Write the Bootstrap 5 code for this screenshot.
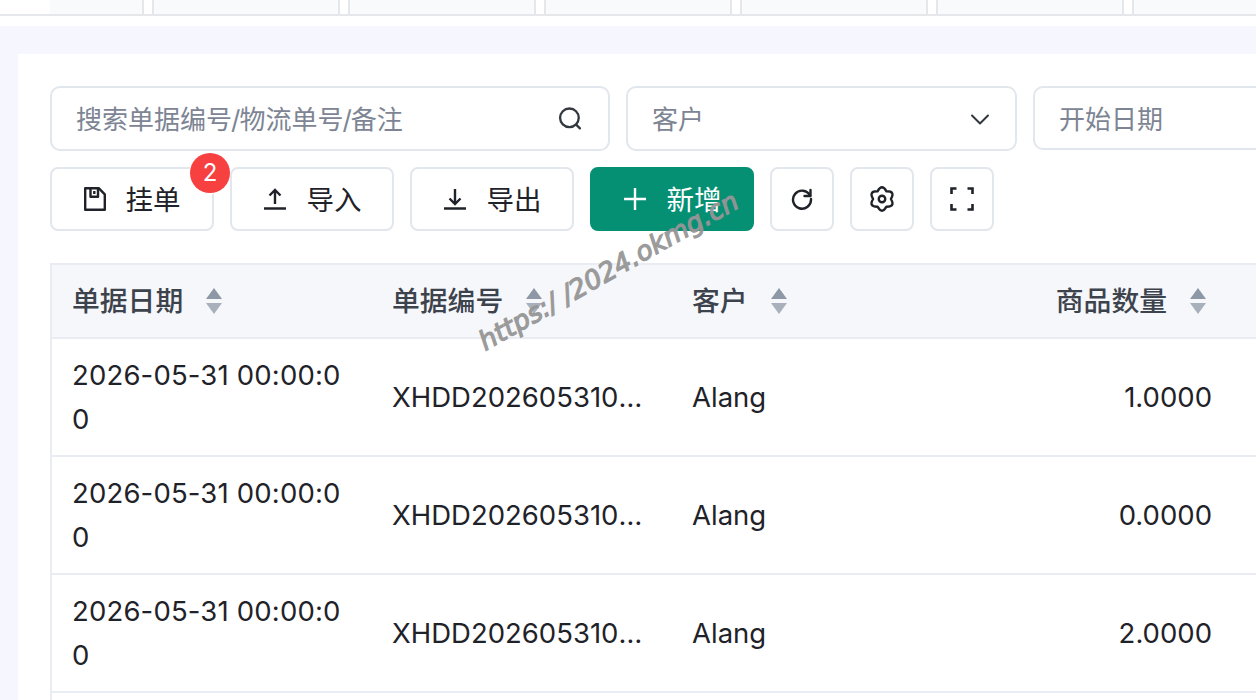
<!doctype html>
<html lang="zh">
<head>
<meta charset="utf-8">
<title>订单</title>
<link href="https://cdn.jsdelivr.net/npm/bootstrap@5.3.0/dist/css/bootstrap.min.css" rel="stylesheet">
<style>
html,body{height:700px;overflow:hidden;background:#fff}
body{font-family:Inter,"Noto Sans CJK SC",sans-serif;color:#1f2329;position:relative;width:1256px}
.tabstrip{height:16px;border-bottom:2px solid #e5e7eb;padding-left:50px;gap:8px;overflow:hidden}
.tabcell{height:14px;width:188px;flex:none;background:#f9fafb;border-right:2px solid #e5e7eb;border-left:2px solid #e5e7eb;box-sizing:border-box}
.tabcell.firstcell{width:94px;border-left:0}
.pagebg{background:#f5f6fe;margin-top:10px;padding:28px 0 0 18px;height:674px}
.sheet{background:#fff;height:646px;padding:32px 0 0 32px;width:1300px}
.filterrow{gap:16px;height:65px}
.fbox{height:65px;border:2px solid #e2e6ed;border-radius:10px;font-size:26px;color:#7d8594;padding:0 24px;display:flex;align-items:center;justify-content:space-between;flex:none;background:#fff}
.fbox>span{padding-top:2px}
.slimch{margin:0 -1px}
.fsearch{width:560px}
.fselect{width:391px}
.fdate{width:400px;height:64px}
.toolrow{gap:16px;margin-top:16px;height:64px}
.tbtn{height:64px;width:164px;border:2px solid #e2e6ed;border-radius:8px;background:#fff;font-size:27.500px;color:#1f2329;display:flex;align-items:center;justify-content:center;gap:20px;padding:0;position:relative}
.tbtn.sq{width:64px}
.tbtn.addbtn{background:#059074;border-color:#059074;color:#fff}
.tbtn svg{flex:none}
.blabel{padding-top:4px}
.pill{position:absolute;left:138px;top:-16px;width:40px;height:40px;border-radius:50%;background:#f74141;color:#fff;font-size:24px;display:flex;align-items:center;justify-content:center;box-shadow:0 0 0 1px #fff}
.gridwrap{margin-top:32px;width:1250px}
.gridtable{table-layout:fixed;width:1250px;margin:0;border-collapse:collapse;font-size:27.500px;color:#1f2329}
.gridtable th{height:74px;background:#f5f7fa;color:#3d434d;font-size:27.800px;font-weight:500;padding:2px 21px 0;vertical-align:middle;border-top:2px solid #e9edf3;border-bottom:2px solid #e9edf3;white-space:nowrap}
.gridtable td{height:118px;padding:0 21px;vertical-align:middle;border-bottom:2px solid #e9edf3;line-height:44px;color:#1f2329}
.gridtable th:first-child,.gridtable td:first-child{border-left:2px solid #e9edf3;padding-left:20px}
.clip{white-space:nowrap;overflow:hidden;text-overflow:ellipsis}
.brk{word-break:break-all;width:280px;letter-spacing:.17px}
.sorter{display:inline-block;vertical-align:-3px;margin-left:23px}
.gridtable th.text-end .sorter{margin-right:6px}
.wmark{position:absolute;left:462px;top:258px;font-size:26.500px;font-style:italic;font-weight:400;-webkit-text-stroke:1.2px rgb(150,150,150);color:rgb(150,150,150);transform:rotate(-29.500deg);white-space:pre;font-family:"DejaVu Sans",sans-serif;pointer-events:none;line-height:1;opacity:.95}
</style>
</head>
<body>
<div class="tabstrip d-flex">
  <div class="tabcell firstcell"></div><div class="tabcell"></div><div class="tabcell"></div><div class="tabcell"></div><div class="tabcell"></div><div class="tabcell"></div><div class="tabcell"></div>
</div>
<div class="pagebg">
  <div class="sheet">
    <div class="filterrow d-flex">
      <div class="fbox fsearch"><span>搜索单据编号<span class="slimch">/</span>物流单号<span class="slimch">/</span>备注</span>
        <svg width="28" height="28" viewBox="0 0 24 24" fill="none" stroke="#33383f" stroke-width="2" stroke-linecap="round"><circle cx="11.500" cy="11" r="8"/><path d="M17.500 17l3 3"/></svg>
      </div>
      <div class="fbox fselect"><span>客户</span>
        <svg width="22" height="22" viewBox="0 0 22 22" fill="none" stroke="#33383f" stroke-width="2" stroke-linecap="round" stroke-linejoin="round"><path d="M3 7.500l8 8 8-8"/></svg>
      </div>
      <div class="fbox fdate"><span>开始日期</span></div>
    </div>
    <div class="toolrow d-flex">
      <button class="tbtn" type="button">
        <svg width="22" height="24" viewBox="0 0 22 24" fill="none" stroke="#1f2329" stroke-width="2.400" stroke-linejoin="round"><path d="M1.200 1.200h13.500l6.100 6.100v15.500H1.200z"/><path d="M6.500 1.200v8.500h7.500V1.200M10.300 4v3"/></svg>
        <span class="blabel">挂单</span><span class="pill">2</span>
      </button>
      <button class="tbtn" type="button">
        <svg width="24" height="24" viewBox="0 0 24 24" fill="none" stroke="#1f2329" stroke-width="2.400"><path d="M12 17V3M6.500 8.500L12 3l5.500 5.500M1 21.500h22"/></svg>
        <span class="blabel">导入</span>
      </button>
      <button class="tbtn" type="button">
        <svg width="24" height="24" viewBox="0 0 24 24" fill="none" stroke="#1f2329" stroke-width="2.400"><path d="M12 2v15M6.500 11.500L12 17l5.500-5.500M1 21.500h22"/></svg>
        <span class="blabel">导出</span>
      </button>
      <button class="tbtn addbtn" type="button">
        <svg width="24" height="24" viewBox="0 0 24 24" fill="none" stroke="#fff" stroke-width="2.400"><path d="M12 1v22M1 12h22"/></svg>
        <span class="blabel">新增</span>
      </button>
      <button class="tbtn sq" type="button">
        <svg width="24" height="24" viewBox="0 0 24 24" fill="none" stroke="#1f2329" stroke-width="2.400" stroke-linecap="round" stroke-linejoin="round"><path d="M20 8.500A9 9 0 1 0 21 12"/><path d="M20.500 3v6h-6"/></svg>
      </button>
      <button class="tbtn sq" type="button">
        <svg width="26" height="26" viewBox="0 0 24 24" fill="none" stroke="#1f2329" stroke-width="2.200" stroke-linejoin="round"><path d="M7.900 4.900Q12-2.500 16.100 4.900Q24.560 4.750 20.200 12Q24.560 19.250 16.100 19.100Q12 26.500 7.900 19.100Q-.56 19.250 3.800 12Q-.56 4.750 7.900 4.900z"/><circle cx="12" cy="12" r="3"/></svg>
      </button>
      <button class="tbtn sq" type="button">
        <svg width="24" height="24" viewBox="0 0 24 24" fill="none" stroke="#1f2329" stroke-width="2.600"><path d="M1.500 7V1.500h5M17.500 1.500h5V7M22.500 17v5.500h-5M6.500 22.500h-5V17"/></svg>
      </button>
    </div>
    <div class="gridwrap">
      <table class="table gridtable">
        <colgroup><col style="width:320px"><col style="width:300px"><col style="width:300px"><col style="width:262px"><col></colgroup>
        <thead>
          <tr>
            <th>单据日期<svg class="sorter" width="16" height="26" viewBox="0 0 16 26"><path fill="#8d97a6" d="M8 0l8 11H0z"/><path fill="#a8b0bc" d="M8 26L0 15h16z"/></svg></th>
            <th>单据编号<svg class="sorter" width="16" height="26" viewBox="0 0 16 26"><path fill="#8d97a6" d="M8 0l8 11H0z"/><path fill="#a8b0bc" d="M8 26L0 15h16z"/></svg></th>
            <th>客户<svg class="sorter" width="16" height="26" viewBox="0 0 16 26"><path fill="#8d97a6" d="M8 0l8 11H0z"/><path fill="#a8b0bc" d="M8 26L0 15h16z"/></svg></th>
            <th class="text-end">商品数量<svg class="sorter" width="16" height="26" viewBox="0 0 16 26"><path fill="#8d97a6" d="M8 0l8 11H0z"/><path fill="#a8b0bc" d="M8 26L0 15h16z"/></svg></th>
            <th></th>
          </tr>
        </thead>
        <tbody>
          <tr><td><div class="brk">2026-05-31 00:00:00</div></td><td><div class="clip">XHDD2026053100001</div></td><td>Alang</td><td class="text-end">1.0000</td><td></td></tr>
          <tr><td><div class="brk">2026-05-31 00:00:00</div></td><td><div class="clip">XHDD2026053100002</div></td><td>Alang</td><td class="text-end">0.0000</td><td></td></tr>
          <tr><td><div class="brk">2026-05-31 00:00:00</div></td><td><div class="clip">XHDD2026053100003</div></td><td>Alang</td><td class="text-end">2.0000</td><td></td></tr>
          <tr><td></td><td></td><td></td><td></td><td></td></tr>
        </tbody>
      </table>
    </div>
  </div>
</div>
<div class="wmark">https:/ /2024.okmg.cn</div>
<script src="https://cdn.jsdelivr.net/npm/bootstrap@5.3.0/dist/js/bootstrap.bundle.min.js"></script>
</body>
</html>
